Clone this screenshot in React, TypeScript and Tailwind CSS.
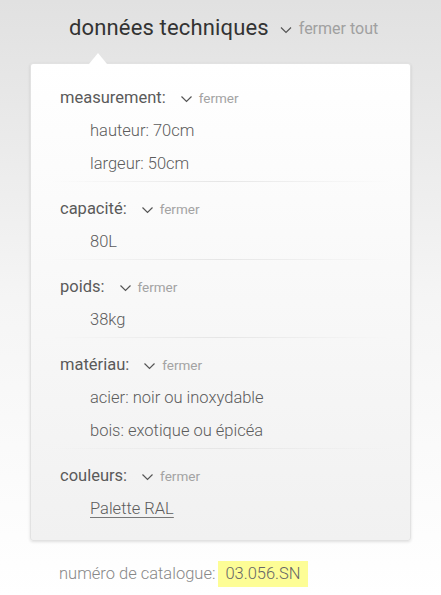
import React from "react";

// spec sheet with collapsible groups (all open)
const sections = [
  { label: "measurement:", items: ["hauteur: 70cm", "largeur: 50cm"] },
  { label: "capacité:", items: ["80L"] },
  { label: "poids:", items: ["38kg"] },
  { label: "matériau:", items: ["acier: noir ou inoxydable", "bois: exotique ou épicéa"] },
  { label: "couleurs:", items: ["Palette RAL"], link: true },
];

function Chevron({ className }: { className?: string }) {
  return (
    <svg viewBox="0 0 12 8" className={className} fill="none" stroke="currentColor" strokeWidth="1.2">
      <path d="M1 1.5 L6 6.5 L11 1.5" />
    </svg>
  );
}

export default function App() {
  return (
    <div
      className="w-[441px] h-[595px] overflow-hidden bg-gradient-to-b from-[#e1e1e1] via-[#f5f5f5] via-50% to-white"
      style={{ fontFamily: "Roboto, 'Liberation Sans', sans-serif" }}
    >
      {/* title */}
      <div className="flex items-center pl-[69px] pt-[3px] h-[52px]">
        <h1 className="text-[22px] text-[#333] font-normal leading-none tracking-[0.15px]">données techniques</h1>
        <Chevron className="w-[12px] h-[8px] ml-[11px] mt-[5px] text-[#555]" />
        <span className="ml-[7px] mt-[3px] text-[16px] text-[#a0a0a0]">fermer tout</span>
      </div>

      {/* card */}
      <div className="relative mx-[30px] mt-[11px] rounded-[3px] border border-[#e2e2e2] bg-gradient-to-b from-white to-[#f1f1f1] shadow-[0_1px_3px_rgba(0,0,0,0.12)] px-[29px] pt-[18px] pb-[14px]">
        <div className="absolute -top-[11px] left-[58px] w-0 h-0 border-l-[9px] border-r-[9px] border-b-[11px] border-l-transparent border-r-transparent border-b-white" />
        {sections.map((s, i) => (
          <div key={s.label} className={i > 0 ? "pt-[11px]" : ""}>
            <div className="flex items-center h-[33px]">
              <span className="text-[16.5px] text-[#5a5a5a]">{s.label}</span>
              <Chevron className="w-[13px] h-[8px] ml-[14px] text-[#555]" />
              <span className="ml-[6px] text-[13.5px] text-[#a3a3a3]">fermer</span>
            </div>
            {s.items.map((it) => (
              <div key={it} className="flex items-center h-[33px] pl-[30px]">
                <span
                  className={
                    "text-[16.5px] font-light text-[#5c5c5c] " + (s.link ? "underline underline-offset-[3px] decoration-[#777]" : "")
                  }
                >
                  {it}
                </span>
              </div>
            ))}
            {i < sections.length - 1 && (
              <div className="h-px mx-[-10px] bg-gradient-to-r from-transparent via-[#e6e6e6] to-transparent" />
            )}
          </div>
        ))}
      </div>

      {/* catalogue */}
      <div className="flex items-center pl-[59px] mt-[20px]">
        <span className="text-[16.5px] font-light text-[#888]">numéro de catalogue:</span>
        <span className="ml-[3px] px-[7px] h-[26px] flex items-center bg-[#fdfd96] text-[16.5px] font-light text-[#666]">03.056.SN</span>
      </div>
    </div>
  );
}
